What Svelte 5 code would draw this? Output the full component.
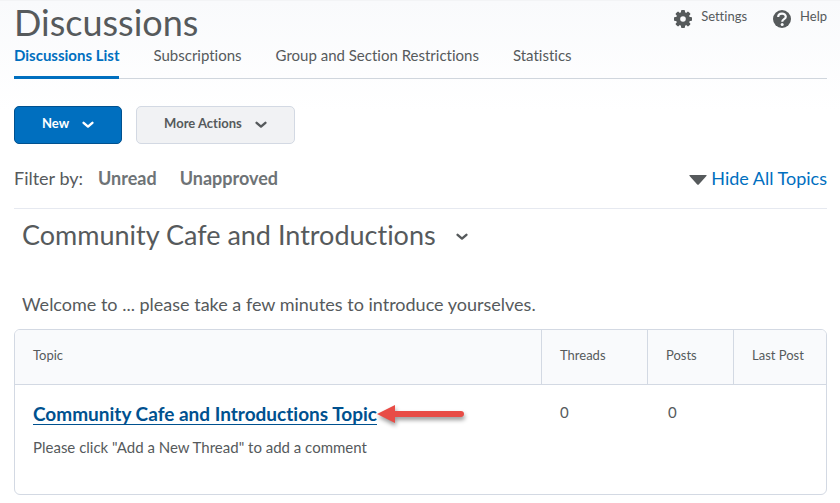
<script lang="ts">
  const tabs = ['Discussions List', 'Subscriptions', 'Group and Section Restrictions', 'Statistics'];
  const filters = ['Unread', 'Unapproved'];

  let activeTab = $state(tabs[0]);
  let topicsVisible = $state(true);

  const topics = [
    {
      title: 'Community Cafe and Introductions Topic',
      description: 'Please click "Add a New Thread" to add a comment',
      threads: 0,
      posts: 0,
      lastPost: ''
    }
  ];
</script>

{#snippet chevron()}
  <svg class="chevron" viewBox="0 0 12 8" aria-hidden="true">
    <path d="M1.6 1.8 L6 5.6 L10.4 1.8" />
  </svg>
{/snippet}

<div class="page">
  <header class="header">
    <h1>Discussions</h1>
    <div class="tools">
      <a href="#settings">
        <svg class="tool-icon" viewBox="0 0 18 18" aria-hidden="true">
          <g fill="currentColor">
            {#each [0, 45, 90, 135] as angle}
              <rect x="7" y="0" width="4" height="18" rx="1" transform="rotate({angle} 9 9)" />
            {/each}
            <circle cx="9" cy="9" r="7" />
          </g>
          <circle cx="9" cy="9" r="2.8" fill="#fafbfd" />
        </svg>
        Settings
      </a>
      <a href="#help">
        <svg class="tool-icon" viewBox="0 0 18 18" aria-hidden="true">
          <circle cx="9" cy="9" r="9" fill="currentColor" />
          <path d="M5.2 7 C5.2 2.6 12.8 2.6 12.8 6.8 C12.8 9.4 9.2 9 9.2 11.8" fill="none" stroke="#fafbfd" stroke-width="2.2" />
          <circle cx="9.2" cy="14.4" r="1.5" fill="#fafbfd" />
        </svg>
        Help
      </a>
    </div>
  </header>

  <nav class="tabs">
    {#each tabs as tab}
      <a href="#tab" class:active={tab === activeTab} onclick={() => (activeTab = tab)}>{tab}</a>
    {/each}
  </nav>

  <div class="actions">
    <button type="button" class="primary">New {@render chevron()}</button>
    <button type="button">More Actions {@render chevron()}</button>
  </div>

  <div class="filters">
    <span>Filter by:</span>
    {#each filters as filter}
      <button type="button">{filter}</button>
    {/each}
    <a href="#topics" class="toggle" onclick={() => (topicsVisible = !topicsVisible)}>
      <svg viewBox="0 0 18 10" aria-hidden="true"><path d="M1 0 H17 Q18.2 0 17.4 1 L10 9.2 Q9 10.2 8 9.2 L0.6 1 Q-0.2 0 1 0 Z" /></svg>
      {topicsVisible ? 'Hide' : 'Show'} All Topics
    </a>
  </div>

  <section class="forum">
    <div class="forum-heading">
      <h2>Community Cafe and Introductions</h2>
      <button type="button" aria-label="Forum actions">{@render chevron()}</button>
    </div>
    <p class="intro">Welcome to ... please take a few minutes to introduce yourselves.</p>

    {#if topicsVisible}
      <table>
        <thead>
          <tr>
            <th class="topic">Topic</th>
            <th class="threads">Threads</th>
            <th class="posts">Posts</th>
            <th class="last">Last Post</th>
          </tr>
        </thead>
        <tbody>
          {#each topics as topic}
            <tr>
              <td>
                <div class="topic-title">
                  <a href="#topic">{topic.title}</a>
                  <svg class="arrow" viewBox="0 0 90 24" aria-hidden="true">
                    <path d="M0 12 L18 3 V9.1 H84 Q87 9.3 87 12 Q87 14.7 84 14.9 H18 V21 Z" />
                  </svg>
                </div>
                <p>{topic.description}</p>
              </td>
              <td>{topic.threads}</td>
              <td class="count">{topic.posts}</td>
              <td>{topic.lastPost}</td>
            </tr>
          {/each}
        </tbody>
      </table>
    {/if}
  </section>
</div>

<style>
  :global(body) {
    background: #fff;
  }

  .page {
    padding: 1px 13px 8px 14px;
    background: linear-gradient(#f9fafc, #fff 110px);
    border-top: 1px solid #f3f4f6;
    color: #565a5c;
    font-family: Lato, sans-serif;
    font-size: 15px;
    font-variant-ligatures: none;
    line-height: 20px;
  }

  a {
    color: inherit;
    text-decoration: none;
  }

  button {
    font: inherit;
    font-variant-ligatures: none;
    color: inherit;
    cursor: pointer;
  }

  h1,
  h2,
  p {
    margin: 0;
    font-weight: 400;
  }

  .header {
    display: flex;
    justify-content: space-between;
    align-items: flex-start;
  }

  h1 {
    font-size: 36px;
    line-height: 40px;
  }

  .tools {
    display: flex;
    gap: 26px;
    padding-top: 4px;
    font-size: 13px;
  }

  .tools a {
    display: flex;
    gap: 9px;
  }

  .tool-icon {
    width: 18px;
    height: 18px;
    margin-top: 4px;
  }

  .tabs {
    display: flex;
    gap: 34px;
    border-bottom: 1px solid #d0d6dd;
  }

  .tabs a {
    padding: 3px 0 11px;
    margin-bottom: -1px;
    border-bottom: 3px solid transparent;
  }

  .tabs a.active {
    border-color: #006fbf;
    color: #006fbf;
    font-weight: 700;
  }

  .chevron {
    width: 12px;
    height: 8px;
    fill: none;
    stroke: currentColor;
    stroke-width: 2.4;
    stroke-linecap: round;
    stroke-linejoin: round;
  }

  .actions {
    display: flex;
    gap: 14px;
    margin-top: 27px;
  }

  .actions button {
    display: flex;
    align-items: center;
    gap: 13px;
    height: 38px;
    padding: 0 27px 4px;
    border: 1px solid #d3d9e3;
    border-radius: 5px;
    background: #f1f2f4;
    font-size: 13px;
    font-weight: 700;
  }

  .actions .chevron {
    margin-top: 4px;
  }

  .actions .primary {
    border-color: #00518f;
    background: #006fbf;
    color: #fff;
  }

  .filters {
    display: flex;
    align-items: center;
    padding: 23px 0 18px;
    border-bottom: 1px solid #e6e9f0;
    font-size: 18px;
    line-height: 23px;
  }

  .filters button {
    padding: 0;
    margin: 0 8px 0 15px;
    border: 0;
    background: none;
    color: #6e7376;
    font-weight: 700;
  }

  .toggle {
    display: flex;
    align-items: center;
    gap: 4px;
    margin-left: auto;
    color: #006fbf;
  }

  .toggle svg {
    width: 18px;
    height: 10px;
    margin-top: 3px;
    fill: #565a5c;
  }

  .forum-heading {
    display: flex;
    align-items: center;
    gap: 20px;
    padding: 8px 8px 0;
  }

  h2 {
    font-size: 27px;
    line-height: 36px;
  }

  .forum-heading button {
    display: flex;
    padding: 4px 0 0;
    border: 0;
    background: none;
  }

  .intro {
    padding: 39px 8px 13px;
    font-size: 18px;
    line-height: 24px;
  }

  table {
    width: 100%;
    border: 1px solid #d3d9e3;
    border-radius: 6px;
    border-spacing: 0;
    table-layout: fixed;
    overflow: hidden;
  }

  th,
  td {
    padding: 0 18px;
    text-align: left;
    vertical-align: top;
    font-weight: 400;
  }

  th {
    height: 55px;
    padding-bottom: 4px;
    box-sizing: border-box;
    border-bottom: 1px solid #d3d9e3;
    background: #f9fafc;
    font-size: 13px;
    vertical-align: middle;
  }

  th + th {
    border-left: 1px solid #d3d9e3;
  }

  .threads {
    width: 106px;
  }

  .posts {
    width: 86px;
  }

  .last {
    width: 93px;
    padding-right: 0;
  }

  td {
    padding-top: 17px;
    padding-bottom: 37px;
  }

  td + td {
    padding-left: 19px;
  }

  .count {
    padding-left: 21px;
  }

  .topic-title {
    display: flex;
    align-items: center;
    margin-bottom: 11px;
  }

  .topic-title a {
    border-bottom: 1px solid #00518f;
    color: #00518f;
    font-size: 19px;
    font-weight: 700;
    line-height: 21px;
  }

  .arrow {
    width: 90px;
    height: 24px;
    fill: #e84c46;
    filter: drop-shadow(1px 3px 2px rgba(0, 0, 0, 0.4));
  }
</style>
